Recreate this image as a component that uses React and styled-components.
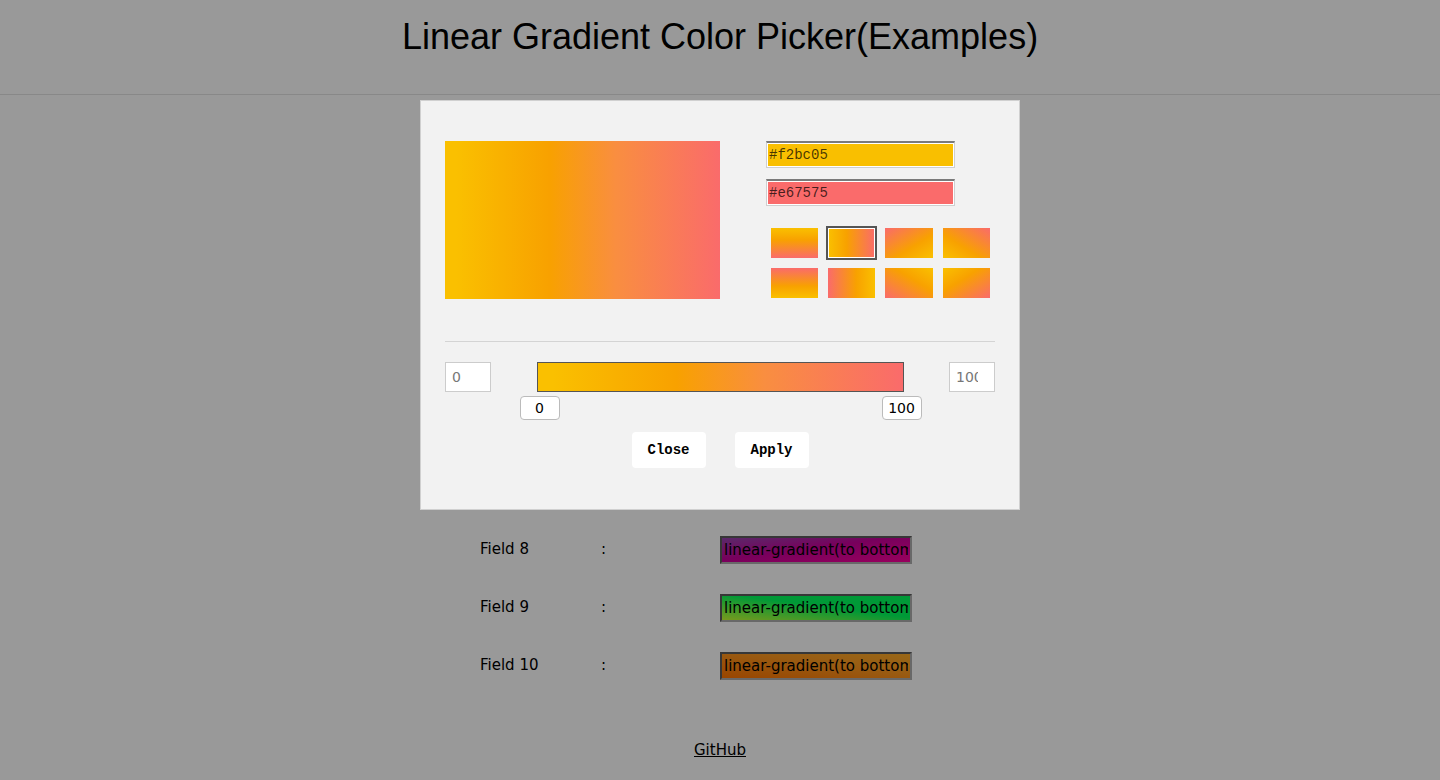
import React from 'react';
import styled, {createGlobalStyle} from 'styled-components';

const GlobalStyle = createGlobalStyle`
    body {
        margin: 0;
        background: #fff;
        font-family: "DejaVu Sans", Verdana, sans-serif;
        color: #000;
    }
`;

const Header = styled.header`
    height: 94px;
    box-sizing: content-box;
    border-bottom: 1px solid #e3e3e3;
    text-align: center;
    h1 {
        margin: 0;
        padding-top: 16px;
        font-family: "Liberation Sans", Arial, sans-serif;
        font-size: 36px;
        font-weight: normal;
        line-height: 41px;
    }
`;

const FieldList = styled.div`
    width: 480px;
    margin: 35px auto 0 auto;
    display: grid;
    grid-template-columns: 121px 119px 192px;
    row-gap: 30px;
    align-items: center;
    font-size: 15px;
    span {
        margin-top: -3px;
    }
`;

const FieldInput = styled.input`
    width: 192px;
    height: 28px;
    box-sizing: border-box;
    padding: 0 2px;
    border: 2px inset #b0b0b0;
    font-family: "DejaVu Sans", Verdana, sans-serif;
    font-size: 15px;
    color: #000;
    background: ${p => p.$bg};
`;

const Footer = styled.div`
    margin-top: 61px;
    text-align: center;
    font-size: 15px;
    a {
        color: #000;
    }
`;

const Backdrop = styled.div`
    position: fixed;
    inset: 0;
    background: rgba(0, 0, 0, 0.4);
`;

const Modal = styled.div`
    position: fixed;
    top: 100px;
    left: 50%;
    transform: translateX(-50%);
    width: 600px;
    box-sizing: border-box;
    padding: 40px 24px 41px 24px;
    background: #f2f2f2;
    border: 1px solid #d0d0d0;
`;

const Top = styled.div`
    display: flex;
    align-items: flex-start;
`;

const Preview = styled.div`
    width: 275px;
    height: 158px;
    background: ${p => p.$bg};
`;

const Side = styled.div`
    margin-left: 46px;
    display: flex;
    flex-direction: column;
`;

const HexInput = styled.input`
    width: 189px;
    height: 27px;
    box-sizing: border-box;
    margin-bottom: 11px;
    padding: 0 2px;
    border: 1px solid #cfcfcf;
    border-top: 2px solid #7a7a7a;
    box-shadow: inset 0 0 0 1px #fff;
    background: ${p => p.$bg};
    font-family: "Liberation Mono", "Courier New", monospace;
    font-size: 14px;
    color: rgba(0, 0, 0, 0.72);
`;

const Swatches = styled.div`
    margin: 11px 0 0 5px;
    display: grid;
    grid-template-columns: 47px 47px 48px 47px;
    grid-auto-rows: 30px;
    gap: 10px;
`;

const Swatch = styled.div`
    background: linear-gradient(${p => p.$dir}, ${p => p.$stops});
    box-shadow: ${p => p.$active ? 'inset 0 0 0 1px #fff, 0 0 0 2px #555' : 'none'};
    cursor: pointer;
`;

const Divider = styled.hr`
    margin: 42px 0 20px 0;
    border: 0;
    border-top: 1px solid #d4d4d4;
`;

const RangeRow = styled.div`
    display: flex;
    justify-content: space-between;
    align-items: flex-start;
`;

const NumInput = styled.input`
    width: 46px;
    height: 30px;
    box-sizing: border-box;
    padding: 0 16px 0 6px;
    border: 1px solid #cccccc;
    background: #fff;
    font-family: "DejaVu Sans", Verdana, sans-serif;
    font-size: 14px;
    color: #777;
`;

const BarWrap = styled.div`
    width: 367px;
`;

const Bar = styled.div`
    height: 30px;
    box-sizing: border-box;
    border: 1px solid #555;
    background: linear-gradient(to right, ${p => p.$stops});
`;

const Track = styled.div`
    position: relative;
    height: 24px;
    margin: 4px 2px 0 3px;
`;

const Handle = styled.div`
    position: absolute;
    top: 0;
    width: 40px;
    height: 24px;
    box-sizing: border-box;
    transform: translateX(-50%);
    border: 1px solid #bbb;
    border-radius: 4px;
    background: #fff;
    font-size: 14px;
    line-height: 22px;
    text-align: center;
`;

const Buttons = styled.div`
    margin-top: 12px;
    display: flex;
    justify-content: center;
    gap: 29px;
`;

const Button = styled.button`
    width: 74px;
    height: 36px;
    border: 0;
    border-radius: 4px;
    background: #fff;
    font-family: "Liberation Mono", "Courier New", monospace;
    font-size: 14px;
    font-weight: bold;
    color: #000;
    cursor: pointer;
`;

const STOPS = '#fac000 4%, #f8a100 38%, #f98e40 62%, #fa6b6b 100%';
const SWATCH_STOPS = '#fac000 0%, #f8a100 40%, #fa6b6b 100%';

const directions = [
    'to bottom', 'to right', 'to top left', 'to top right',
    'to top', 'to left', 'to bottom left', 'to bottom right'
];

const fields = [
    'linear-gradient(100deg, #ff7e5f, #feb47b)',
    'linear-gradient(100deg, #43cea2, #185a9d)',
    'linear-gradient(100deg, #ffafbd, #ffc3a0)',
    'linear-gradient(100deg, #2193b0, #6dd5ed)',
    'linear-gradient(100deg, #cc2b5e, #753a88)',
    'linear-gradient(100deg, #ee9ca7, #ffdde1)',
    'linear-gradient(100deg, #42275a, #734b6d)',
    'linear-gradient(to bottom right, #9646b1 0%, #c8009a 45%, #ff009d 100%)',
    'linear-gradient(to top right, #c8ff32 0%, #00ff5c 55%, #00ff5c 100%)',
    'linear-gradient(to top right, #ff7400 0%, #ff9a20 60%, #ffad28 100%)'
];

const Field = ({num, bg}) => (
    <>
        <span>Field {num}</span>
        <span>:</span>
        <FieldInput $bg={bg} defaultValue="linear-gradient(to bottom, #000, #fff)" readOnly/>
    </>
);

const Picker = () => {
    const handles = [0, 100];
    return (
        <Modal>
            <Top>
                <Preview $bg={`linear-gradient(to right, ${STOPS})`}/>
                <Side>
                    <HexInput $bg="#f9bf00" defaultValue="#f2bc05"/>
                    <HexInput $bg="#fa6b6b" defaultValue="#e67575"/>
                    <Swatches>
                        {directions.map(d => (
                            <Swatch key={d} $dir={d} $stops={SWATCH_STOPS} $active={d === 'to right'}/>
                        ))}
                    </Swatches>
                </Side>
            </Top>
            <Divider/>
            <RangeRow>
                <NumInput defaultValue="0"/>
                <BarWrap>
                    <Bar $stops={STOPS}/>
                    <Track>
                        {handles.map(h => (
                            <Handle key={h} style={{left: h + '%'}}>{h}</Handle>
                        ))}
                    </Track>
                </BarWrap>
                <NumInput defaultValue="100"/>
            </RangeRow>
            <Buttons>
                <Button>Close</Button>
                <Button>Apply</Button>
            </Buttons>
        </Modal>
    );
};

export default function App() {
    return (
        <>
            <GlobalStyle/>
            <Header>
                <h1>Linear Gradient Color Picker(Examples)</h1>
            </Header>
            <FieldList>
                {fields.map((bg, i) => <Field key={i} num={i + 1} bg={bg}/>)}
            </FieldList>
            <Footer>
                <a href="#github">GitHub</a>
            </Footer>
            <Backdrop/>
            <Picker/>
        </>
    );
}
